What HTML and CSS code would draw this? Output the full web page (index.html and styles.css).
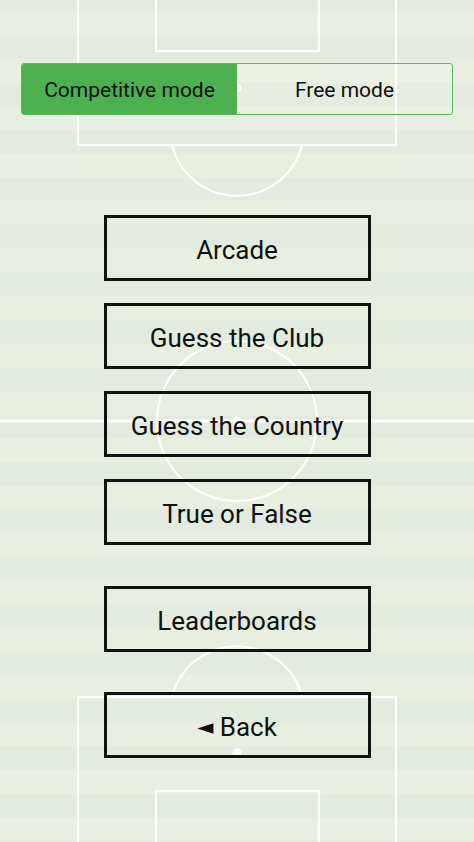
FILE: index.html
```html
<!DOCTYPE html>
<html lang="en">
<head>
    <meta charset="UTF-8">
    <meta name="viewport" content="width=device-width, initial-scale=1.0">
    <title>Game Modes</title>
    <link rel="stylesheet" href="styles.css">
</head>
<body>

    <!-- pitch drawn behind everything -->
    <svg class="pitch" viewBox="0 0 474 842" xmlns="http://www.w3.org/2000/svg">
        <g fill="none" stroke="#ffffff" stroke-width="2.2">
            <rect x="78" y="-5" width="318" height="150"/>
            <rect x="156" y="-5" width="163" height="56"/>
            <path d="M172 145 A67 67 0 0 0 302 145"/>
            <line x1="0" y1="421" x2="474" y2="421" stroke-width="3"/>
            <circle cx="237" cy="421" r="80"/>
            <rect x="78" y="697" width="318" height="150"/>
            <rect x="156" y="791" width="163" height="56"/>
            <path d="M172 697 A67 67 0 0 1 302 697"/>
        </g>
        <g fill="#ffffff">
            <circle cx="237" cy="88" r="4.5"/>
            <circle cx="237" cy="421" r="4.5"/>
            <circle cx="237" cy="753" r="4.5"/>
        </g>
    </svg>

    <div class="page">
        <div class="mode-toggle">
            <button class="mode active">Competitive mode</button>
            <button class="mode">Free mode</button>
        </div>

        <div class="menu">
            <button class="menu-btn">Arcade</button>
            <button class="menu-btn">Guess the Club</button>
            <button class="menu-btn">Guess the Country</button>
            <button class="menu-btn">True or False</button>
        </div>

        <div class="menu extra">
            <button class="menu-btn">Leaderboards</button>
            <button class="menu-btn"><span class="arrow">&#9668;</span> Back</button>
        </div>
    </div>

</body>
</html>
```

FILE: styles.css
```css
* {
    margin: 0;
    padding: 0;
    box-sizing: border-box;
}

body {
    width: 474px;
    height: 842px;
    overflow: hidden;
    position: relative;
    font-family: Roboto, "Liberation Sans", sans-serif;
    color: #111;
    background: repeating-linear-gradient(to bottom,
        #e3eadf 0px, #e3eadf 11.8px,
        #e9efe0 11.8px, #e9efe0 35.5px,
        #e3eadf 35.5px, #e3eadf 47.4px);
}

.pitch {
    position: absolute;
    top: 0;
    left: 0;
    width: 474px;
    height: 842px;
}

.page {
    position: relative;
    display: flex;
    flex-direction: column;
    align-items: center;
    padding-top: 63px;
}

.mode-toggle {
    display: flex;
    width: 432px;
    height: 52px;
    border: 1.5px solid #5cb660;
    border-radius: 3px;
    overflow: hidden;
}

.mode {
    flex: 1;
    border: none;
    background: rgba(255, 255, 255, 0.12);
    font-family: inherit;
    font-size: 21px;
    color: #111;
    padding-top: 2px;
    cursor: pointer;
}

.mode.active {
    background: #4caf50;
}

.menu {
    display: flex;
    flex-direction: column;
    gap: 22px;
    margin-top: 100px;
}

.menu.extra {
    margin-top: 41px;
    gap: 40px;
}

.menu-btn {
    width: 267px;
    height: 66px;
    border: 3px solid #111;
    background: transparent;
    font-family: inherit;
    font-size: 26px;
    color: #111;
    padding-top: 4px;
    cursor: pointer;
}

.arrow {
    font-family: "DejaVu Sans", sans-serif;
    font-size: 21px;
    position: relative;
    top: -2px;
}
```
